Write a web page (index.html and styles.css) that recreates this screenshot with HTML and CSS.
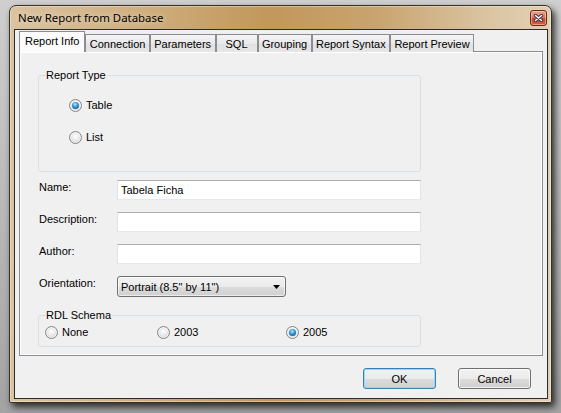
FILE: index.html
```html
<!DOCTYPE html>
<html>
<head>
<meta charset="utf-8">
<title>New Report from Database</title>
<link rel="stylesheet" href="styles.css">
</head>
<body>
<div class="window">
  <div class="titlebar">
    <span class="title">New Report from Database</span>
    <div class="close">
      <svg width="9" height="8" viewBox="0 0 9 8">
        <path d="M1.5 1.5 L7.5 6.5 M7.5 1.5 L1.5 6.5" stroke="#2e3350" stroke-width="3.2" stroke-linecap="round" fill="none"/>
        <path d="M1.5 1.5 L7.5 6.5 M7.5 1.5 L1.5 6.5" stroke="#ffffff" stroke-width="1.5" stroke-linecap="round" fill="none"/>
      </svg>
    </div>
  </div>
  <div class="client">
    <div class="tabs">
      <div class="tab active">Report Info</div>
      <div class="tab">Connection</div>
      <div class="tab">Parameters</div>
      <div class="tab tab-min">SQL</div>
      <div class="tab">Grouping</div>
      <div class="tab">Report Syntax</div>
      <div class="tab">Report Preview</div>
    </div>
    <div class="panel">
      <fieldset class="group group-type">
        <legend>Report Type</legend>
        <div class="type-opts">
          <div class="opt"><span class="radio checked"></span>Table</div>
          <div class="opt"><span class="radio"></span>List</div>
        </div>
      </fieldset>
      <div class="fields">
        <div class="row"><span class="lbl">Name:</span><div class="input">Tabela Ficha</div></div>
        <div class="row"><span class="lbl">Description:</span><div class="input"></div></div>
        <div class="row"><span class="lbl">Author:</span><div class="input"></div></div>
        <div class="row"><span class="lbl">Orientation:</span>
          <div class="select"><span>Portrait (8.5" by 11")</span>
            <svg class="arrow" width="7" height="4" viewBox="0 0 7 4"><path d="M0 0H7L3.5 4Z" fill="#000"/></svg>
          </div>
        </div>
      </div>
      <fieldset class="group group-rdl">
        <legend>RDL Schema</legend>
        <div class="rdl-opts">
          <div class="opt"><span class="radio"></span>None</div>
          <div class="opt"><span class="radio"></span>2003</div>
          <div class="opt"><span class="radio checked"></span>2005</div>
        </div>
      </fieldset>
    </div>
    <div class="footer">
      <button class="btn btn-ok">OK</button>
      <button class="btn">Cancel</button>
    </div>
  </div>
</div>
</body>
</html>
```
FILE: styles.css
```css
html, body {
  margin: 0;
  height: 413px;
  overflow: hidden;
}
body {
  box-sizing: border-box;
  padding: 5px 0 0 9px;
  background: linear-gradient(#cfcfcf, #a3a3a3);
  font-family: "Liberation Sans", Arial, sans-serif;
  font-size: 11px;
  color: #000;
}

.window {
  width: 543px;
  height: 398px;
  box-sizing: border-box;
  border: 1px solid #3a3126;
  border-radius: 7px 7px 2px 2px;
  background: linear-gradient(90deg, #dac3a0 0%, #d0b082 22%, #c2975a 48%, #c9a470 68%, #dac4a2 88%, #e2d0b4 100%);
  box-shadow: inset 0 0 0 1px rgba(255, 255, 255, 0.35), 3px 4px 7px rgba(0, 0, 0, 0.75);
  display: flex;
  flex-direction: column;
}

.titlebar {
  height: 23px;
  display: flex;
  align-items: center;
  padding: 0 4px 0 8px;
}
.title {
  font-family: "Noto Sans", "Open Sans", sans-serif;
  font-size: 11.4px;
  color: #000;
  text-shadow: 0 0 6px rgba(255, 255, 255, 0.7);
}
.close {
  margin-left: auto;
  align-self: flex-start;
  margin-top: 4px;
  width: 17px;
  height: 16px;
  box-sizing: border-box;
  border: 1px solid #6c2a1c;
  border-radius: 3px;
  background: linear-gradient(#e9a590 0%, #dc7a62 45%, #c9432a 55%, #d4603f 100%);
  box-shadow: inset 0 0 0 1px rgba(255, 220, 200, 0.5);
  display: flex;
  align-items: center;
  justify-content: center;
}

.client {
  flex: 1;
  margin: 0 3px 3px 4px;
  border: 1px solid #2c2c2c;
  background: #f0f0f0;
  display: flex;
  flex-direction: column;
  padding-top: 1px;
}

.tabs {
  display: flex;
  align-items: flex-end;
  height: 21px;
  margin: 0 0 -1px 4px;
  position: relative;
  z-index: 1;
}
.tab {
  height: 18px;
  box-sizing: border-box;
  border: 1px solid #898c95;
  border-bottom: none;
  padding: 0 3.4px;
  background: linear-gradient(#f4f4f4, #e9e9e9 50%, #e0e0e0 50%, #e6e6e6);
  display: flex;
  align-items: center;
  justify-content: center;
  white-space: nowrap;
}
.tab-min {
  min-width: 42px;
}
.tab.active {
  height: 21px;
  padding: 0 5px 2px;
  background: #fbfbfb;
}

.panel {
  height: 305px;
  box-sizing: border-box;
  margin: 0 4px;
  border: 1px solid #898c95;
  box-shadow: inset 0 0 0 1px #ffffff;
  background: #f0f0f0;
  padding: 0 0 0 18px;
}

.group {
  margin: 0;
  border: 1px solid #d5dfe5;
  border-radius: 3px;
  box-sizing: border-box;
  width: 383px;
  padding: 0;
  min-inline-size: 0;
}
.group legend {
  margin-left: 6px;
  padding: 0 1px;
  line-height: 13px;
}
.group-type {
  margin-top: 17px;
  padding: 15px 0 26px 0;
}
.type-opts {
  display: flex;
  flex-direction: column;
  gap: 16px;
  padding-left: 30px;
}
.opt {
  display: flex;
  align-items: center;
  height: 16px;
}
.radio {
  width: 13px;
  height: 13px;
  box-sizing: border-box;
  border-radius: 50%;
  border: 1px solid #858585;
  background: radial-gradient(circle at 50% 40%, #ffffff 0, #eeeeee 35%, #cbcbcb 100%);
  box-shadow: inset 0 0 0 1px rgba(255, 255, 255, 0.6);
  display: inline-flex;
  align-items: center;
  justify-content: center;
  margin-right: 4px;
  flex: none;
}
.radio.checked::after {
  content: "";
  width: 7px;
  height: 7px;
  border-radius: 50%;
  background: radial-gradient(circle at 45% 35%, #c4ecfd 0, #45a6e0 35%, #12639e 75%, #0a3d68 100%);
}

.fields {
  display: flex;
  flex-direction: column;
  gap: 12px;
  margin-top: 8px;
  padding-left: 1px;
}
.row {
  display: flex;
  align-items: flex-start;
}
.lbl {
  width: 78px;
  line-height: 13px;
  margin-top: 1px;
}
.input {
  width: 304px;
  height: 20px;
  box-sizing: border-box;
  background: #fff;
  border: 1px solid;
  border-color: #abadb3 #e2e3ea #e3e9ef #e2e3ea;
  padding-left: 3px;
  display: flex;
  align-items: center;
}
.select {
  width: 169px;
  height: 21px;
  box-sizing: border-box;
  border: 1px solid #707070;
  border-radius: 3px;
  background: linear-gradient(#f2f2f2 0, #ebebeb 50%, #dddddd 50%, #cfcfcf 100%);
  box-shadow: inset 0 0 0 1px rgba(255, 255, 255, 0.6);
  display: flex;
  align-items: center;
  padding-left: 3px;
}
.arrow {
  margin-left: auto;
  margin-right: 5px;
}

.group-rdl {
  margin-top: 12px;
  padding: 2px 0 6px 0;
}
.rdl-opts {
  display: grid;
  grid-template-columns: 112px 129px auto;
  padding-left: 6px;
}

.footer {
  display: flex;
  justify-content: flex-end;
  gap: 22px;
  padding: 12px 16px 0 0;
}
.btn {
  width: 73px;
  height: 21px;
  box-sizing: border-box;
  border: 1px solid #707070;
  border-radius: 3px;
  background: linear-gradient(#f2f2f2 0, #ebebeb 50%, #dddddd 50%, #cfcfcf 100%);
  box-shadow: inset 0 0 0 1px rgba(255, 255, 255, 0.7);
  font-family: "Liberation Sans", Arial, sans-serif;
  font-size: 11px;
  color: #000;
  padding: 0;
}
.btn-ok {
  border-color: #3c7fb1;
  box-shadow: inset 0 0 0 1px #8fdcf8;
}
```
